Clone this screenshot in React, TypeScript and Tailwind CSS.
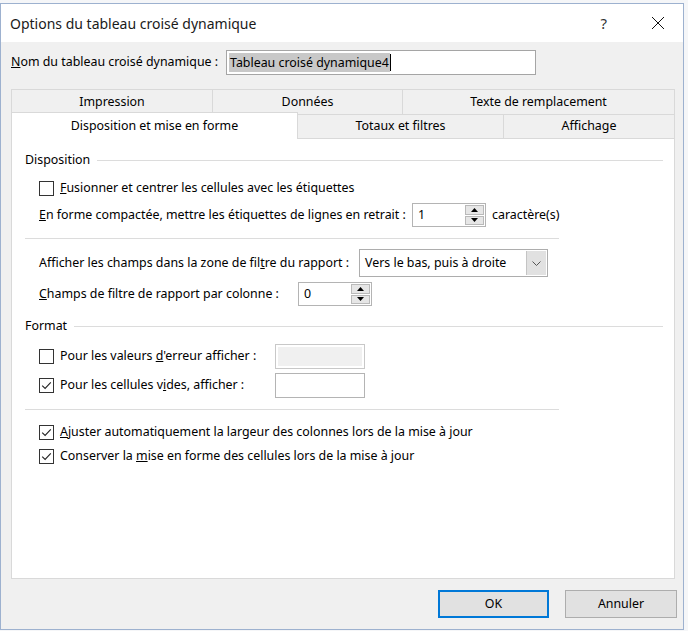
import type { ReactNode } from "react";

const Check = ({ checked }: { checked?: boolean }) => (
  <span className="w-[15px] h-[15px] border border-[#333333] bg-white flex items-center justify-center shrink-0">
    {checked && (
      <svg width="11" height="11" viewBox="0 0 11 11">
        <path d="M1.2 5.6 L4.1 8.4 L9.8 2.4" fill="none" stroke="#222" strokeWidth="1.1" />
      </svg>
    )}
  </span>
);

const Arrow = ({ up }: { up?: boolean }) => (
  <svg width="7" height="4" viewBox="0 0 7 4">
    <path d={up ? "M0 4 L3.5 0 L7 4 Z" : "M0 0 L7 0 L3.5 4 Z"} fill="#000" />
  </svg>
);

const Spin = ({ value }: { value: string }) => (
  <div className="h-[24px] w-[74px] border border-[#b4b4b4] bg-white flex shrink-0">
    <span className="flex-1 pl-[5px] leading-[22px]">{value}</span>
    <div className="w-[20px] flex flex-col py-[1px] pr-[1px] gap-[1px]">
      <div className="flex-1 bg-[#e6e6e6] border border-[#b9b9b9] flex items-center justify-center">
        <Arrow up />
      </div>
      <div className="flex-1 bg-[#e6e6e6] border border-[#b9b9b9] flex items-center justify-center">
        <Arrow />
      </div>
    </div>
  </div>
);

const Row = ({ className, children }: { className: string; children: ReactNode }) => (
  <div className={`flex items-center ${className}`}>{children}</div>
);

export default function App() {
  return (
    <div
      className="w-[688px] h-[631px] bg-[#f5f6f8] overflow-hidden text-[12.4px] text-black"
      style={{ fontFamily: '"Segoe UI", "Noto Sans", sans-serif' }}
    >
      <div className="h-[3px]" />
      <div className="w-[684px] h-[627px] border border-[#9db1cf] flex flex-col bg-[#f0f0f0]">
        {/* title bar */}
        <div className="h-[38px] bg-white flex items-center shrink-0">
          <span className="pl-[9px] text-[14px] text-[#1a1a1a]">Options du tableau croisé dynamique</span>
          <span className="ml-auto text-[15px] text-[#333] mr-[44px]">?</span>
          <svg width="14" height="14" viewBox="0 0 14 14" className="mr-[18px]">
            <path d="M1 1 L13 13 M13 1 L1 13" stroke="#111" strokeWidth="1" />
          </svg>
        </div>

        {/* name row */}
        <Row className="h-[25px] mt-[8px] pl-[10px]">
          <span className="w-[215px]">
            <span className="underline">N</span>om du tableau croisé dynamique :
          </span>
          <div className="w-[310px] h-[25px] border border-[#a5a5a5] bg-white flex items-center pl-[2px]">
            <span className="bg-[#c8c8c8] leading-[19px] px-[1px]">Tableau croisé dynamique4</span>
            <span className="w-px h-[17px] bg-black" />
          </div>
        </Row>

        {/* tabs */}
        <div className="ml-[10px] w-[664px] mt-[14px] flex flex-col">
          <div className="flex h-[25px]">
            <div className="w-[201px] border-t border-l border-[#d9d9d9] flex items-center justify-center">Impression</div>
            <div className="w-[190px] border-t border-l border-[#d9d9d9] flex items-center justify-center">Données</div>
            <div className="flex-1 border-t border-l border-r border-[#d9d9d9] flex items-center justify-center">Texte de remplacement</div>
          </div>
          <div className="flex h-[24px] border-t border-[#d9d9d9] items-end">
            <div className="relative z-10 w-[287px] h-[27px] -mb-px bg-white border-t border-l border-r border-[#d9d9d9] flex items-center justify-center">
              Disposition et mise en forme
            </div>
            <div className="w-[206px] h-full border-r border-[#d9d9d9] flex items-center justify-center">Totaux et filtres</div>
            <div className="flex-1 h-full border-r border-[#d9d9d9] flex items-center justify-center">Affichage</div>
          </div>

          {/* panel */}
          <div className="h-[441px] bg-white border border-[#d9d9d9] flex flex-col pl-[13px]">
            <Row className="h-[20px] mt-[11px]">
              <span>Disposition</span>
              <div className="flex-1 h-px bg-[#dcdcdc] ml-[7px] mr-[11px]" />
            </Row>
            <Row className="h-[20px] mt-[8px] pl-[14px]">
              <Check />
              <span className="ml-[6px]">
                <span className="underline">F</span>usionner et centrer les cellules avec les étiquettes
              </span>
            </Row>
            <Row className="h-[24px] mt-[5px] pl-[14px]">
              <span className="w-[373px] whitespace-nowrap">
                <span className="underline">E</span>n forme compactée, mettre les étiquettes de lignes en retrait :
              </span>
              <Spin value="1" />
              <span className="ml-[6px]">caractère(s)</span>
            </Row>
            <div className="h-px w-[534px] bg-[#dcdcdc] mt-[11px]" />
            <Row className="h-[28px] mt-[10px] pl-[14px]">
              <span className="w-[320px] whitespace-nowrap">
                Afficher les champs dans la zone de fil<span className="underline">t</span>re du rapport :
              </span>
              <div className="w-[189px] h-[28px] border border-[#adadad] bg-white flex">
                <span className="flex-1 pl-[5px] leading-[26px]">Vers le bas, puis à droite</span>
                <div className="w-[20px] my-[1px] mr-[1px] bg-[#e1e1e1] border-l border-[#c4c4c4] flex items-center justify-center">
                  <svg width="9" height="5" viewBox="0 0 9 5">
                    <path d="M0.5 0.5 L4.5 4.5 L8.5 0.5" fill="none" stroke="#555" strokeWidth="1" />
                  </svg>
                </div>
              </div>
            </Row>
            <Row className="h-[24px] mt-[5px] pl-[14px]">
              <span className="w-[259px] whitespace-nowrap">
                <span className="underline">C</span>hamps de filtre de rapport par colonne :
              </span>
              <Spin value="0" />
            </Row>
            <Row className="h-[20px] mt-[10px]">
              <span>Format</span>
              <div className="flex-1 h-px bg-[#dcdcdc] ml-[7px] mr-[11px]" />
            </Row>
            <Row className="h-[24px] mt-[8px] pl-[14px]">
              <Check />
              <span className="ml-[6px] w-[215px] whitespace-nowrap">
                Pour les valeurs <span className="underline">d</span>'erreur afficher :
              </span>
              <div className="w-[90px] h-[25px] border border-[#c8c8c8] bg-white p-[2px]">
                <div className="w-full h-full bg-[#f0f0f0]" />
              </div>
            </Row>
            <Row className="h-[25px] mt-[5px] pl-[14px]">
              <Check checked />
              <span className="ml-[6px] w-[215px] whitespace-nowrap">
                Pour les cellules v<span className="underline">i</span>des, afficher :
              </span>
              <div className="w-[90px] h-[25px] border border-[#b4b4b4] bg-white" />
            </Row>
            <div className="h-px w-[534px] bg-[#dcdcdc] mt-[11px]" />
            <Row className="h-[20px] mt-[12px] pl-[14px]">
              <Check checked />
              <span className="ml-[6px]">
                <span className="underline">A</span>juster automatiquement la largeur des colonnes lors de la mise à jour
              </span>
            </Row>
            <Row className="h-[20px] mt-[4px] pl-[14px]">
              <Check checked />
              <span className="ml-[6px]">
                Conserver la <span className="underline">m</span>ise en forme des cellules lors de la mise à jour
              </span>
            </Row>
          </div>
        </div>

        {/* buttons */}
        <div className="flex justify-end gap-[16px] mt-[11px] mr-[6px]">
          <button className="w-[111px] h-[28px] bg-[#e1e1e1] border-2 border-[#0078d7]">OK</button>
          <button className="w-[112px] h-[28px] bg-[#e1e1e1] border border-[#adadad]">Annuler</button>
        </div>
      </div>
    </div>
  );
}
